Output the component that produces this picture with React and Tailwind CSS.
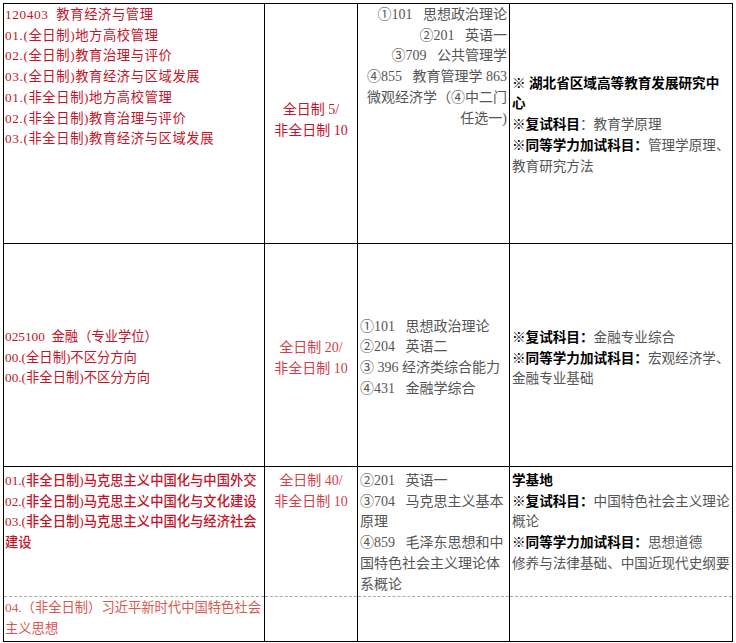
const font = "font-['Liberation_Serif','Noto_Sans_CJK_SC',serif]";
const sp = '\u2002 ';

function Lines({ items, className = '' }) {
  return (
    <div className={className}>
      {items.map((t, i) => (
        <div key={i} className="whitespace-pre">{t}</div>
      ))}
    </div>
  );
}

function B({ children }) {
  return <span className="font-bold text-black">{children}</span>;
}

export default function App() {
  return (
    <div className={`bg-white w-[736px] h-[643px] overflow-hidden pl-[3px] pt-[3px] text-[14px] leading-[20.7px] ${font}`}>
      <table className="table-fixed border-collapse w-[729px]">
        <colgroup>
          <col className="w-[261px]" />
          <col className="w-[93px]" />
          <col className="w-[152px]" />
          <col className="w-[223px]" />
        </colgroup>
        <tbody>
          {/* 教育经济与管理 */}
          <tr className="h-[240px]">
            <td className="border border-black align-top pl-[1px] pt-[1px] text-[13.3px] tracking-[0.6px] text-[#c4142a]">
              <Lines
                items={[
                  '120403  教育经济与管理',
                  '01.(全日制)地方高校管理',
                  '02.(全日制)教育治理与评价',
                  '03.(全日制)教育经济与区域发展',
                  '01.(非全日制)地方高校管理',
                  '02.(非全日制)教育治理与评价',
                  '03.(非全日制)教育经济与区域发展',
                ]}
              />
            </td>
            <td className="border border-black align-middle pb-[6px] text-center text-[#c4142a]">
              <div>全日制 5/</div>
              <div>非全日制 10</div>
            </td>
            <td className="border border-black align-top pt-[1px] pr-[2px] text-right text-[#555]">
              <Lines
                items={[
                  `①101${sp}思想政治理论`,
                  `②201${sp}英语一`,
                  `③709${sp}公共管理学`,
                  `④855${sp}教育管理学 863`,
                  '微观经济学（④中二门',
                  '任选一)',
                ]}
              />
            </td>
            <td className="border border-black align-middle pl-[2px] pt-[4px] text-[13.6px] text-[#555]">
              <div className="font-bold text-black">※ 湖北省区域高等教育发展研究中</div>
              <div className="font-bold text-black">心</div>
              <div><B>※复试科目</B>：教育学原理</div>
              <div className="whitespace-nowrap"><B>※同等学力加试科目：</B>管理学原理、</div>
              <div>教育研究方法</div>
            </td>
          </tr>

          {/* 金融 */}
          <tr className="h-[223px]">
            <td className="border border-black align-middle pl-[1px] pt-[6px] text-[13.3px] text-[#c4142a]">
              <Lines
                items={[
                  '025100  金融（专业学位）',
                  '00.(全日制)不区分方向',
                  '00.(非全日制)不区分方向',
                ]}
              />
            </td>
            <td className="border border-black align-middle pt-[8px] text-center text-[#d4404a]">
              <div>全日制 20/</div>
              <div>非全日制 10</div>
            </td>
            <td className="border border-black align-middle pl-[2px] pt-[6px] text-[#555]">
              <Lines
                items={[
                  `①101${sp}思想政治理论`,
                  `②204${sp}英语二`,
                  '③ 396 经济类综合能力',
                  `④431${sp}金融学综合`,
                ]}
              />
            </td>
            <td className="border border-black align-middle pl-[2px] pt-[8px] text-[13.6px] text-[#555]">
              <div><B>※复试科目：</B>金融专业综合</div>
              <div className="whitespace-nowrap"><B>※同等学力加试科目：</B>宏观经济学、</div>
              <div>金融专业基础</div>
            </td>
          </tr>

          {/* 马克思主义中国化 */}
          <tr className="h-[130px]">
            <td className="border border-black [border-bottom-style:dashed] border-b-[#aaa] align-top pl-[1px] pt-[4px] text-[13.3px] font-medium text-[#c4142a]">
              <Lines
                items={[
                  '01.(非全日制)马克思主义中国化与中国外交',
                  '02.(非全日制)马克思主义中国化与文化建设',
                  '03.(非全日制)马克思主义中国化与经济社会',
                  '建设',
                ]}
              />
            </td>
            <td className="border border-black [border-bottom-style:dashed] border-b-[#aaa] align-top pt-[4px] text-center text-[#d4404a]">
              <div>全日制 40/</div>
              <div>非全日制 10</div>
            </td>
            <td className="border border-black [border-bottom-style:dashed] border-b-[#aaa] align-top pl-[2px] pt-[4px] text-[#555]">
              <Lines
                items={[
                  `②201${sp}英语一`,
                  `③704${sp}马克思主义基本`,
                  '原理',
                  `④859${sp}毛泽东思想和中`,
                  '国特色社会主义理论体',
                  '系概论',
                ]}
              />
            </td>
            <td className="border border-black [border-bottom-style:dashed] border-b-[#aaa] align-top pl-[2px] pt-[4px] text-[13.6px] text-[#555]">
              <div className="font-bold text-black">学基地</div>
              <div className="whitespace-nowrap"><B>※复试科目：</B>中国特色社会主义理论</div>
              <div>概论</div>
              <div><B>※同等学力加试科目：</B>思想道德</div>
              <div className="whitespace-nowrap">修养与法律基础、中国近现代史纲要</div>
            </td>
          </tr>

          {/* 习近平新时代 */}
          <tr className="h-[45px]">
            <td className="border border-black [border-top-style:dashed] border-t-[#aaa] align-top pl-[1px] pt-[1px] text-[13.3px] text-[#d9574f]">
              <Lines items={['04.（非全日制）习近平新时代中国特色社会', '主义思想']} />
            </td>
            <td className="border border-black [border-top-style:dashed] border-t-[#aaa]"></td>
            <td className="border border-black [border-top-style:dashed] border-t-[#aaa]"></td>
            <td className="border border-black [border-top-style:dashed] border-t-[#aaa]"></td>
          </tr>
        </tbody>
      </table>
    </div>
  );
}
